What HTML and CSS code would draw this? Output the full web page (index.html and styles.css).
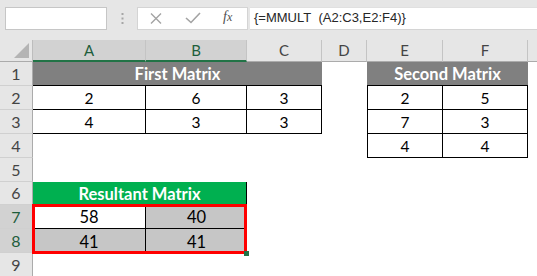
FILE: index.html
```html
<!DOCTYPE html>
<html>
<head>
<meta charset="utf-8">
<link rel="stylesheet" href="styles.css">
</head>
<body>
<div class="app">
  <div class="fbar">
    <div class="namebox"></div>
    <div class="grip">
      <svg width="3" height="11" viewBox="0 0 3 11"><rect x="0.5" y="0" width="2" height="2" fill="#a6a6a6"/><rect x="0.5" y="4.5" width="2" height="2" fill="#a6a6a6"/><rect x="0.5" y="9" width="2" height="2" fill="#a6a6a6"/></svg>
    </div>
    <div class="fbtns">
      <svg class="ico-x" width="12" height="11" viewBox="0 0 12 11"><path d="M1 0.5 L11 10.5 M11 0.5 L1 10.5" stroke="#a3a3a3" stroke-width="1.4" fill="none"/></svg>
      <svg class="ico-ok" width="16" height="12" viewBox="0 0 16 12"><path d="M1 6 L6 10.5 L15 1" stroke="#a3a3a3" stroke-width="1.6" fill="none"/></svg>
      <span class="fx">f<span class="fx-x">x</span></span>
    </div>
    <div class="finput">{=MMULT&nbsp; (A2:C3,E2:F4)}</div>
  </div>
  <div class="sheet">
    <div class="corner"><span class="tri"></span></div>
    <div class="ch sel">A</div>
    <div class="ch sel">B</div>
    <div class="ch">C</div>
    <div class="ch">D</div>
    <div class="ch">E</div>
    <div class="ch">F</div>
    <div class="ch last"></div>

    <div class="rh">1</div>
    <div class="cell title grey span3">First Matrix</div>
    <div class="cell"></div>
    <div class="cell title grey span2">Second Matrix</div>
    <div class="cell"></div>

    <div class="rh">2</div>
    <div class="cell bx">2</div>
    <div class="cell bx">6</div>
    <div class="cell bx">3</div>
    <div class="cell"></div>
    <div class="cell bx bl">2</div>
    <div class="cell bx">5</div>
    <div class="cell"></div>

    <div class="rh">3</div>
    <div class="cell bx">4</div>
    <div class="cell bx">3</div>
    <div class="cell bx">3</div>
    <div class="cell"></div>
    <div class="cell bx bl">7</div>
    <div class="cell bx">3</div>
    <div class="cell"></div>

    <div class="rh">4</div>
    <div class="cell span4"></div>
    <div class="cell bx bl">4</div>
    <div class="cell bx">4</div>
    <div class="cell"></div>

    <div class="rh">5</div>
    <div class="cell span7"></div>

    <div class="rh">6</div>
    <div class="cell title green span2">Resultant Matrix</div>
    <div class="cell span5"></div>

    <div class="rh sel">7</div>
    <div class="result">
      <div class="cell res active brr bbb">58</div>
      <div class="cell res shade bbb">40</div>
      <div class="cell res shade brr">41</div>
      <div class="cell res shade">41</div>
      <span class="frame"></span>
      <span class="handle"></span>
    </div>
    <div class="cell span5"></div>

    <div class="rh sel">8</div>
    <div class="cell span5"></div>

    <div class="rh">9</div>
    <div class="cell span7"></div>
  </div>
</div>
</body>
</html>
```

FILE: styles.css
```css
html, body {
  margin: 0;
  padding: 0;
  background: #ffffff;
}
.app {
  width: 537px;
  height: 276px;
  overflow: hidden;
  font-family: "Lato", "Liberation Sans", sans-serif;
}
.fbar {
  display: flex;
  align-items: flex-start;
  height: 40px;
  box-sizing: border-box;
  padding: 7px 0 0 5px;
  background: #e6e6e6;
}
.namebox {
  width: 102px;
  height: 23px;
  box-sizing: border-box;
  background: #fff;
  border: 1px solid #c6c6c6;
}
.grip {
  width: 30px;
  height: 23px;
  display: flex;
  align-items: center;
  justify-content: center;
}
.fbtns {
  width: 111px;
  height: 23px;
  box-sizing: border-box;
  background: #fff;
  border: 1px solid #d4d4d4;
  display: flex;
  align-items: center;
  padding-left: 12px;
}
.ico-x { margin-top: -1px; }
.ico-ok { margin-left: 23px; margin-top: -1px; }
.fx {
  margin-left: 22px;
  font-family: "Liberation Serif", serif;
  font-style: italic;
  font-size: 14px;
  color: #505050;
  line-height: 1;
  margin-top: -3px;
}
.fx-x { font-size: 12px; }
.finput {
  flex: 1;
  height: 23px;
  box-sizing: border-box;
  margin-left: 2px;
  background: #fff;
  border-top: 1px solid #e0e0e0;
  border-bottom: 1px solid #d4d4d4;
  padding-left: 4px;
  font-family: "Liberation Sans", sans-serif;
  font-size: 13px;
  line-height: 20px;
  color: #262626;
  white-space: nowrap;
}

.sheet {
  display: grid;
  grid-template-columns: 33px 113px 101px 75px 45px 76px 85px 1fr;
  grid-template-rows: 22px 24px 24px 24px 24px 24px 23px 24px 24px 24px;
}
.corner {
  position: relative;
  background: #e6e6e6;
  border-right: 1px solid #bdbdbd;
  border-bottom: 1px solid #ababab;
}
.tri {
  position: absolute;
  right: 3px;
  bottom: 3px;
  width: 0;
  height: 0;
  border-left: 15px solid transparent;
  border-bottom: 15px solid #b4b4b4;
}
.ch {
  background: #e6e6e6;
  border-right: 1px solid #c4c4c4;
  border-bottom: 1px solid #ababab;
  display: flex;
  align-items: flex-end;
  justify-content: center;
  padding-bottom: 3px;
  box-sizing: border-box;
  font-size: 15px;
  line-height: 15px;
  color: #444;
}
.ch.sel {
  background: #d2d2d2;
  border-bottom: 2px solid #217346;
  color: #1e5e3c;
  padding-bottom: 2px;
}
.ch.last { border-right: none; }
.rh {
  background: #e6e6e6;
  border-right: 1px solid #ababab;
  border-bottom: 1px solid #d0d0d0;
  box-sizing: border-box;
  display: flex;
  align-items: flex-end;
  justify-content: center;
  padding-bottom: 3px;
  font-size: 16px;
  line-height: 16px;
  color: #444;
}
.rh.sel {
  background: #d2d2d2;
  color: #1e5e3c;
}
.cell {
  box-sizing: border-box;
  display: flex;
  align-items: flex-end;
  justify-content: center;
  padding-bottom: 3px;
  font-size: 15.5px;
  line-height: 15px;
  color: #000;
}
.span2 { grid-column: span 2; }
.span3 { grid-column: span 3; }
.span4 { grid-column: span 4; }
.span5 { grid-column: span 5; }
.span7 { grid-column: span 7; }
.bx {
  border-right: 1px solid #000;
  border-bottom: 1px solid #000;
}
.bl { border-left: 1px solid #000; }
.title {
  font-weight: bold;
  font-size: 16.5px;
  color: #fff;
  border-bottom: 1px solid #000;
}
.grey { background: #808080; }
.green {
  background: #00b050;
  border-right: 1px solid #000;
  border-bottom: none;
}
.result {
  grid-column: span 2;
  grid-row: span 2;
  position: relative;
  display: grid;
  grid-template-columns: 113px 101px;
  grid-template-rows: 24px 24px;
}
.res { font-size: 16.5px; line-height: 16px; padding-bottom: 3px; }
.active { background: #fff; }
.shade { background: #c6c6c6; }
.brr { border-right: 1px solid #000; }
.bbb { border-bottom: 1px solid #000; }
.frame {
  position: absolute;
  top: -1px;
  left: -1px;
  right: 0;
  bottom: -1px;
  border: 3px solid #ff0000;
}
.handle {
  position: absolute;
  right: -2px;
  bottom: -3px;
  width: 5px;
  height: 5px;
  background: #217346;
}
```
